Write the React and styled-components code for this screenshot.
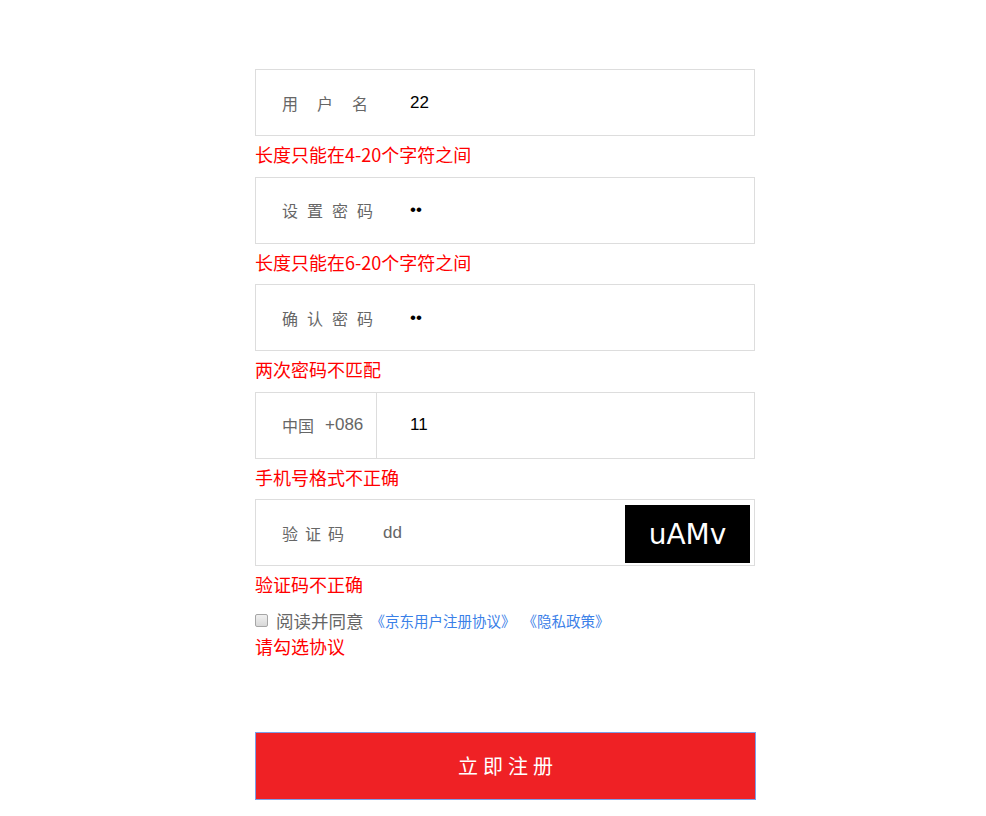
import { createGlobalStyle } from "styled-components";
import styled from "styled-components";

// ----------------------------------------------------------------------

const GlobalStyle = createGlobalStyle`
  body {
    margin: 0;
    background: #fff;
    font-family: "Liberation Sans", "Noto Sans CJK SC", sans-serif;
  }
`;

const Page = styled.div`
  padding: 69px 0 0 255px;
`;

const Form = styled.form`
  width: 500px;
`;

const Field = styled.div`
  display: flex;
  align-items: center;
  height: 67px;
  box-sizing: border-box;
  border: 1px solid #ddd;
`;

const Label = styled.div`
  display: flex;
  align-items: center;
  align-self: stretch;
  box-sizing: border-box;
  width: ${(p) => p.$width || 121}px;
  padding-left: 26px;
  font-size: 16px;
  color: #666;
  letter-spacing: ${(p) => p.$spacing || 0}px;
  white-space: nowrap;
  border-right: ${(p) => (p.$divider ? "1px solid #ddd" : "none")};
`;

const Code = styled.span`
  margin-left: 11px;
  font-size: 17px;
`;

const Input = styled.input`
  flex: 1;
  min-width: 0;
  margin-left: 33px;
  padding: 0;
  border: none;
  outline: none;
  background: transparent;
  font-family: "Liberation Sans", "Noto Sans CJK SC", sans-serif;
  font-size: 17px;
  color: ${(p) => p.$color || "#000"};
`;

const Captcha = styled.div`
  align-self: flex-start;
  display: flex;
  align-items: center;
  justify-content: center;
  width: 125px;
  height: 58px;
  margin: 5px 4px 0 0;
  background: #000;
  color: #fff;
  font-family: "DejaVu Sans", sans-serif;
  font-size: 28px;
`;

const Error = styled.div`
  height: ${(p) => p.$height ?? 40.5}px;
  box-sizing: border-box;
  padding-top: ${(p) => p.$top ?? 8}px;
  font-family: "Noto Sans CJK SC", sans-serif;
  font-size: 18px;
  line-height: 20px;
  color: #f00;
`;

const Agreement = styled.div`
  display: flex;
  align-items: center;
  height: 28px;
  font-family: "Noto Sans CJK SC", sans-serif;
`;

const Check = styled.input`
  appearance: none;
  box-sizing: border-box;
  width: 13px;
  height: 13px;
  margin: 0 8px 0 0;
  border: 1px solid #a6a6a6;
  border-radius: 2px;
  background: linear-gradient(#f0f0f0, #d8d8d8);
`;

const AgreeText = styled.span`
  font-size: 17.5px;
  color: #666;
  line-height: 20px;
`;

const Link = styled.a`
  margin-left: 7px;
  font-size: 14.5px;
  line-height: 20px;
  color: #3a80e8;
  text-decoration: none;
`;

const Submit = styled.button`
  display: block;
  width: 501px;
  height: 68px;
  margin-top: 73px;
  background: #ef2125;
  border: 1px solid #7d9ee8;
  color: #fff;
  font-family: "Noto Sans CJK SC", sans-serif;
  font-size: 20px;
  letter-spacing: 5px;
  text-indent: 5px;
`;

const fields = [
  { label: "用户名", spacing: 19, value: "22", error: "长度只能在4-20个字符之间" },
  { label: "设置密码", spacing: 9, value: "22", type: "password", error: "长度只能在6-20个字符之间" },
  { label: "确认密码", spacing: 9, value: "22", type: "password", error: "两次密码不匹配" },
];

export default function App() {
  return (
    <>
      <GlobalStyle />
      <Page>
        <Form onSubmit={(e) => e.preventDefault()}>
          {fields.map((f) => (
            <div key={f.label}>
              <Field>
                <Label $spacing={f.spacing}>{f.label}</Label>
                <Input type={f.type || "text"} defaultValue={f.value} />
              </Field>
              <Error>{f.error}</Error>
            </div>
          ))}

          <Field>
            <Label $divider>
              中国<Code>+086</Code>
            </Label>
            <Input defaultValue="11" />
          </Field>
          <Error>手机号格式不正确</Error>

          <Field>
            <Label $spacing={7} $width={94}>
              验证码
            </Label>
            <Input defaultValue="dd" $color="#666" />
            <Captcha>uAMv</Captcha>
          </Field>
          <Error>验证码不正确</Error>

          <Agreement>
            <Check type="checkbox" />
            <AgreeText>阅读并同意</AgreeText>
            <Link href="#">《京东用户注册协议》</Link>
            <Link href="#">《隐私政策》</Link>
          </Agreement>
          <Error $top={1} $height={24}>
            请勾选协议
          </Error>

          <Submit type="submit">立即注册</Submit>
        </Form>
      </Page>
    </>
  );
}
